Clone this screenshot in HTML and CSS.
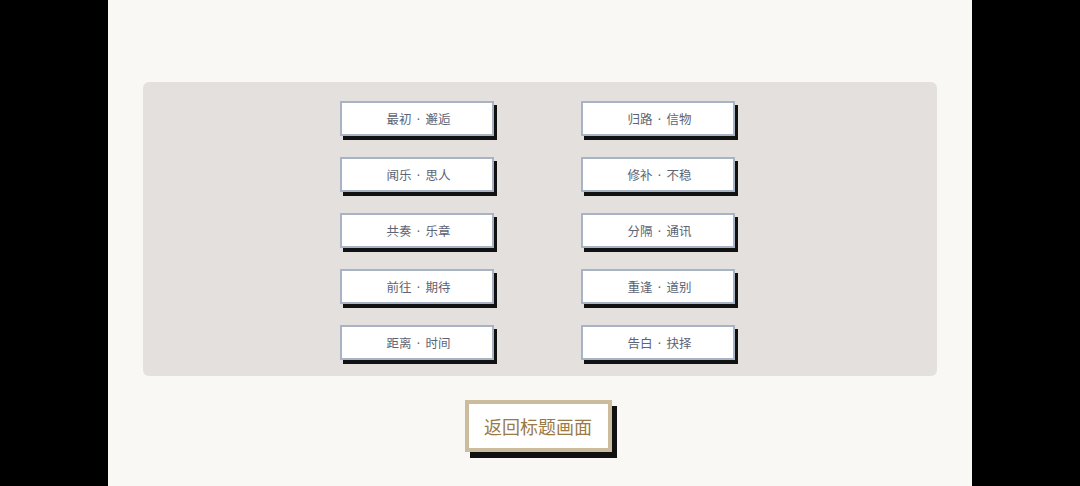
FILE: index.html
```html
<!DOCTYPE html>
<html lang="zh">
<head>
<meta charset="utf-8">
<link rel="stylesheet" href="styles.css">
</head>
<body>
<div class="stage">
  <div class="panel">
    <div class="grid">
      <button class="chap">最初 · 邂逅</button>
      <button class="chap">归路 · 信物</button>
      <button class="chap">闻乐 · 思人</button>
      <button class="chap">修补 · 不稳</button>
      <button class="chap">共奏 · 乐章</button>
      <button class="chap">分隔 · 通讯</button>
      <button class="chap">前往 · 期待</button>
      <button class="chap">重逢 · 道别</button>
      <button class="chap">距离 · 时间</button>
      <button class="chap">告白 · 抉择</button>
    </div>
  </div>
  <div class="footer">
    <button class="back">返回标题画面</button>
  </div>
</div>
</body>
</html>
```

FILE: styles.css
```css
html, body {
  margin: 0;
  padding: 0;
  background: #000;
  height: 486px;
  overflow: hidden;
  font-family: "Noto Sans", "Noto Sans CJK SC", sans-serif;
}
.stage {
  width: 864px;
  height: 486px;
  margin: 0 auto;
  background: #faf8f4;
  padding-top: 82px;
  box-sizing: border-box;
}
.panel {
  margin: 0 35px;
  height: 294px;
  box-sizing: border-box;
  background: #e4e0dd;
  border-radius: 6px;
  padding-top: 19px;
}
.grid {
  display: grid;
  grid-template-columns: 154px 154px;
  grid-auto-rows: 35px;
  column-gap: 87px;
  row-gap: 21px;
  justify-content: center;
  padding-right: 6px;
}
.chap {
  margin: 0;
  padding: 2px 0 0 4px;
  background: #fff;
  border: 2px solid #a8b4c6;
  box-shadow: 3px 4px 0 #111;
  color: #5d6475;
  font-family: inherit;
  font-size: 12.5px;
  word-spacing: 2px;
  line-height: 29px;
  text-align: center;
}
.footer {
  display: flex;
  justify-content: center;
  padding-top: 24px;
}
.back {
  margin: 0 0 0 -4px;
  padding: 0;
  width: 147px;
  height: 52px;
  box-sizing: border-box;
  background: #fff;
  border: 4px solid #cbbc9e;
  box-shadow: 5px 6px 0 #111;
  color: #9a7a46;
  font-family: "Noto Sans CJK SC", sans-serif;
  font-size: 18px;
  text-align: center;
}
```
